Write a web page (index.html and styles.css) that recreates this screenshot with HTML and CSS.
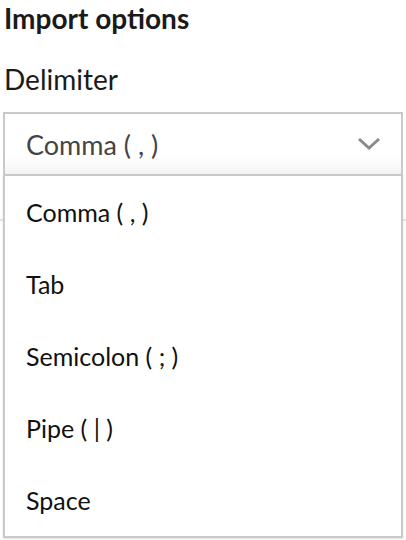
FILE: index.html
```html
<!DOCTYPE html>
<html>
<head>
<meta charset="utf-8">
<link rel="stylesheet" href="styles.css">
</head>
<body>
<div class="panel">
  <h2 class="title">Import options</h2>
  <div class="label">Delimiter</div>
  <div class="field">
    <div class="select">
      <span class="value">Comma ( , )</span>
      <svg class="chevron" width="24" height="14" viewBox="0 0 24 14"><path d="M2 2 L12 11 L22 2" fill="none" stroke="#8a8a8a" stroke-width="3"/></svg>
    </div>
    <div class="below">
      <div class="divider"></div>
    </div>
    <ul class="menu">
      <li>Comma ( , )</li>
      <li>Tab</li>
      <li>Semicolon ( ; )</li>
      <li>Pipe ( | )</li>
      <li>Space</li>
    </ul>
  </div>
</div>
</body>
</html>
```
FILE: styles.css
```css
html, body {
  margin: 0;
  padding: 0;
  background: #fff;
}
body {
  font-family: Lato, "Open Sans", sans-serif;
  color: #1a1a1a;
}
.panel {
  padding: 0 3px 0 3px;
}
.title {
  margin: 0;
  padding: 2px 0 0 1px;
  font-size: 28px;
  font-weight: 700;
  line-height: 32px;
}
.label {
  margin-top: 29px;
  padding-left: 1px;
  font-size: 28px;
  line-height: 32px;
}
.field {
  position: relative;
  margin-top: 17px;
}
.select {
  height: 60px;
  border: 2px solid #c7c9cc;
  display: flex;
  align-items: center;
  justify-content: space-between;
  padding: 0 20px 0 21px;
  background: linear-gradient(#fff 70%, #f4f4f4);
}
.value {
  font-size: 27px;
  color: #444;
}
.chevron {
  display: block;
}
.below {
  height: 358px;
}
.divider {
  margin: 43px -3px 0;
  height: 2px;
  background: #e3e4e6;
}
.menu {
  position: absolute;
  top: 62px;
  left: 0;
  right: 0;
  margin: 0;
  padding: 0;
  list-style: none;
  background: #fff;
  border: 2px solid #c7c9cc;
  box-shadow: 0 1px 2px rgba(0,0,0,0.12);
}
.menu li {
  height: 72px;
  display: flex;
  align-items: center;
  padding-left: 21px;
  font-size: 25px;
  color: #111;
}
```
